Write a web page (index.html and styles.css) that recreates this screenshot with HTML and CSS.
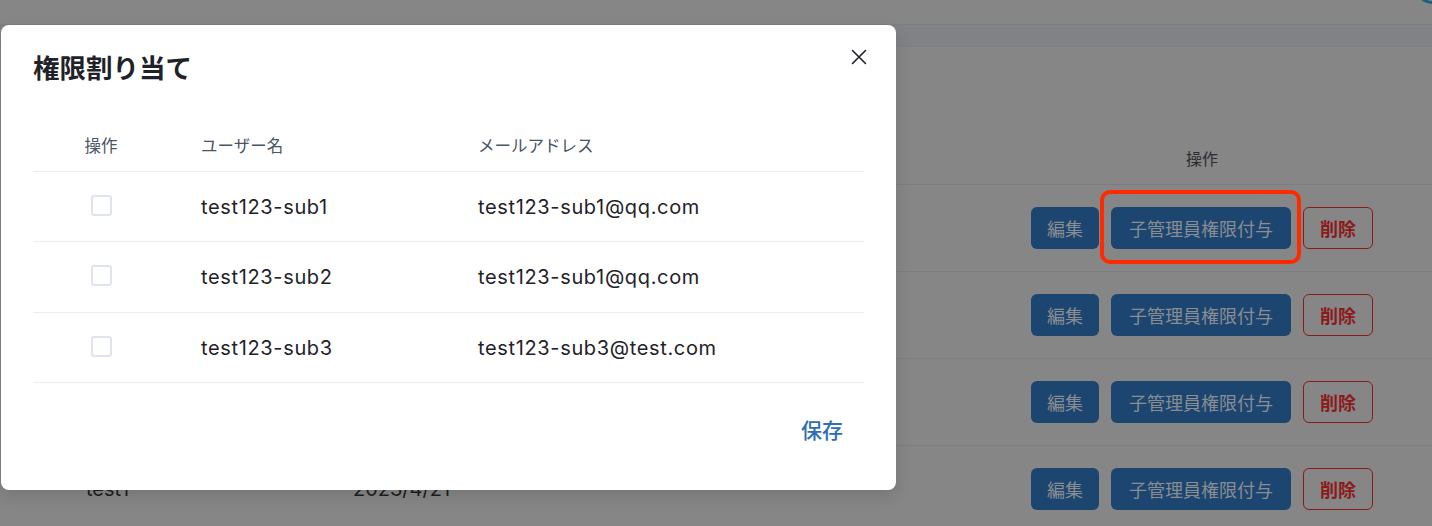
FILE: index.html
```html
<!DOCTYPE html>
<html lang="ja">
<head>
<meta charset="utf-8">
<title>権限割り当て</title>
<link rel="stylesheet" href="styles.css">
</head>
<body>
<div class="page">
  <div class="topbar"><span class="avatar"></span></div>
  <div class="band"></div>
  <div class="main">
    <div class="bg-row bg-head">
      <div class="bg-name"></div>
      <div class="bg-date"></div>
      <div class="bg-actions"><span class="bg-head-label">操作</span></div>
    </div>
    <div class="bg-row">
      <div class="bg-name"></div>
      <div class="bg-date"></div>
      <div class="bg-actions">
        <span class="btn btn-edit">編集</span>
        <span class="btn btn-grant">子管理員権限付与</span>
        <span class="btn btn-del">削除</span>
      </div>
    </div>
    <div class="bg-row">
      <div class="bg-name"></div>
      <div class="bg-date"></div>
      <div class="bg-actions">
        <span class="btn btn-edit">編集</span>
        <span class="btn btn-grant">子管理員権限付与</span>
        <span class="btn btn-del">削除</span>
      </div>
    </div>
    <div class="bg-row">
      <div class="bg-name"></div>
      <div class="bg-date"></div>
      <div class="bg-actions">
        <span class="btn btn-edit">編集</span>
        <span class="btn btn-grant">子管理員権限付与</span>
        <span class="btn btn-del">削除</span>
      </div>
    </div>
    <div class="bg-row">
      <div class="bg-name">test1</div>
      <div class="bg-date">2023/4/21</div>
      <div class="bg-actions">
        <span class="btn btn-edit">編集</span>
        <span class="btn btn-grant">子管理員権限付与</span>
        <span class="btn btn-del">削除</span>
      </div>
    </div>
  </div>
</div>

<div class="highlight"></div>

<div class="modal">
  <h2 class="modal-title">権限割り当て</h2>
  <button class="modal-close" aria-label="close">
    <svg width="16" height="16" viewBox="0 0 16 16"><path d="M1.5 1.5 L14.5 14.5 M14.5 1.5 L1.5 14.5" stroke="#1f2329" stroke-width="1.6" fill="none" stroke-linecap="round"/></svg>
  </button>
  <div class="utable">
    <div class="urow uhead">
      <div class="ucell ucheck">操作</div>
      <div class="ucell">ユーザー名</div>
      <div class="ucell">メールアドレス</div>
    </div>
    <div class="urow">
      <div class="ucell ucheck"><span class="checkbox"></span></div>
      <div class="ucell">test123-sub1</div>
      <div class="ucell">test123-sub1@qq.com</div>
    </div>
    <div class="urow">
      <div class="ucell ucheck"><span class="checkbox"></span></div>
      <div class="ucell">test123-sub2</div>
      <div class="ucell">test123-sub1@qq.com</div>
    </div>
    <div class="urow">
      <div class="ucell ucheck"><span class="checkbox"></span></div>
      <div class="ucell">test123-sub3</div>
      <div class="ucell">test123-sub3@test.com</div>
    </div>
  </div>
  <div class="modal-footer">
    <button class="save">保存</button>
  </div>
</div>
</body>
</html>
```

FILE: styles.css
```css
* { box-sizing: border-box; }
html, body {
  margin: 0;
  padding: 0;
  width: 1432px;
  height: 526px;
  overflow: hidden;
  background: #868686;
  font-family: "Inter", "Noto Sans CJK JP", sans-serif;
}

/* background page (already dimmed) */
.page { width: 1432px; }
.topbar {
  height: 25px;
  border-bottom: 1px solid #7b7e83;
  position: relative;
  overflow: hidden;
}
.avatar {
  position: absolute;
  left: 1414px;
  top: -34px;
  width: 38px;
  height: 38px;
  border-radius: 50%;
  border: 3px solid #1f5f80;
}
.band {
  height: 22px;
  background: #818285;
  border-bottom: 1px solid #7e8084;
}
.main { padding-top: 84px; }
.bg-row {
  display: flex;
  align-items: center;
  height: 87px;
  border-bottom: 1px solid #7c7e82;
  padding-left: 86px;
  padding-right: 59px;
  font-size: 20px;
  color: #1e1e1e;
}
.bg-head { height: 54px; }
.bg-head-label { font-size: 16px; color: #2a2d33; }
.bg-name { width: 267px; }
.bg-date { width: 200px; }
.bg-actions {
  margin-left: auto;
  width: 342px;
  display: flex;
  justify-content: center;
  gap: 12px;
}
.btn {
  height: 42px;
  display: inline-flex;
  align-items: center;
  justify-content: center;
  border-radius: 6px;
  font-size: 18px;
}
.btn-edit { width: 68px; background: #1c4670; color: #8a8d91; }
.btn-grant { width: 180px; background: #1c4670; color: #8a8d91; }
.btn-del {
  width: 70px;
  border: 1px solid #8b1a1a;
  color: #8b1a1a;
  font-weight: 600;
}

.highlight {
  position: absolute;
  left: 1100px;
  top: 190px;
  width: 201px;
  height: 74px;
  border: 4px solid #ff2a00;
  border-radius: 10px;
}

/* modal */
.modal {
  position: absolute;
  left: 1px;
  top: 25px;
  width: 895px;
  height: 465px;
  background: #fff;
  border-radius: 8px;
  box-shadow: 0 6px 16px rgba(0, 0, 0, 0.12);
  padding: 28px 32px 0 32px;
}
.modal-title {
  margin: 0;
  font-size: 26.5px;
  line-height: 30px;
  font-weight: 600;
  color: #1f2329;
}
.modal-close {
  position: absolute;
  right: 29px;
  top: 24px;
  width: 16px;
  height: 16px;
  padding: 0;
  border: 0;
  background: none;
  display: flex;
}
.utable { margin-top: 35px; }
.urow {
  display: grid;
  grid-template-columns: 136px 277px 1fr;
  align-items: center;
  height: 70px;
  border-bottom: 1px solid #e8edf3;
  font-size: 20px;
  letter-spacing: 0.65px;
  color: #1f2329;
}
.urow:nth-child(3) { height: 71px; }
.uhead {
  height: 54px;
  font-size: 16.5px;
  letter-spacing: 0;
  color: #4b5563;
}
.ucell { padding-left: 32px; }
.ucell.ucheck { padding-left: 0; text-align: center; display: flex; justify-content: center; }
.checkbox {
  display: block;
  width: 21px;
  height: 21px;
  margin-top: -3px;
  border: 2px solid #e0e5ed;
  border-radius: 3px;
}
.modal-footer {
  display: flex;
  justify-content: flex-end;
  padding-right: 21px;
  margin-top: 34px;
}
.save {
  border: 0;
  background: none;
  padding: 0;
  font-family: inherit;
  font-size: 21px;
  line-height: 28px;
  font-weight: 500;
  color: #2f6db5;
}
```
